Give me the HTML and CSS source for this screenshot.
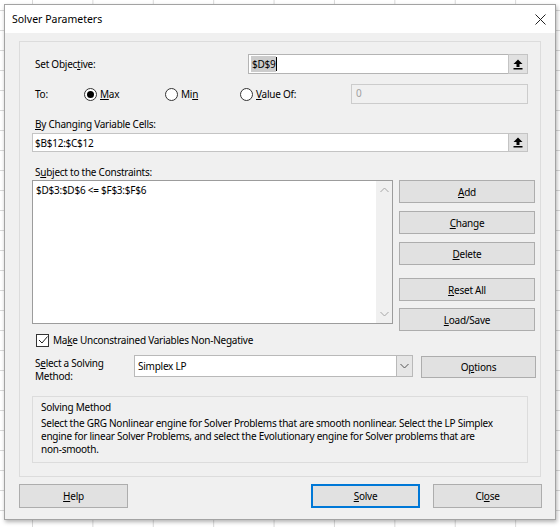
FILE: index.html
```html
<!DOCTYPE html>
<html lang="en">
  <head>
    <meta charset="UTF-8" />
    <title>Solver Parameters</title>
    <link rel="stylesheet" href="styles.css">
  </head>
  <body>
    <div class="dialog">
      <div class="titlebar">
        <span class="title">Solver Parameters</span>
        <svg class="close" width="11" height="11" viewBox="0 0 11 11">
          <path d="M0.5 0.5 L10.5 10.5 M10.5 0.5 L0.5 10.5" stroke="#222" stroke-width="1" fill="none" />
        </svg>
      </div>

      <div class="content">
        <div class="panel">
          <div class="row row-objective">
            <span class="label objective-label">Set Objec<u>t</u>ive:</span>
            <div class="ref-input objective-input">
              <span class="field"><span class="selected">$D$9</span><span class="caret"></span></span>
              <span class="ref-btn">
                <svg width="10" height="11" viewBox="0 0 10 11">
                  <path d="M5 0.5 L9.5 5 L6.5 5 L6.5 8 L3.5 8 L3.5 5 L0.5 5 Z" fill="#000" />
                  <rect x="0.5" y="9" width="9" height="1.5" fill="#000" />
                </svg>
              </span>
            </div>
          </div>

          <div class="row row-to">
            <span class="label to-label">To:</span>
            <span class="option option-max"><span class="radio checked"></span><span><u>M</u>ax</span></span>
            <span class="option option-min"><span class="radio"></span><span>Mi<u>n</u></span></span>
            <span class="option option-value"><span class="radio"></span><span><u>V</u>alue Of:</span></span>
            <div class="value-input">0</div>
          </div>

          <div class="caption"><u>B</u>y Changing Variable Cells:</div>
          <div class="ref-input changing-input">
            <span class="field">$B$12:$C$12</span>
            <span class="ref-btn">
              <svg width="10" height="11" viewBox="0 0 10 11">
                <path d="M5 0.5 L9.5 5 L6.5 5 L6.5 8 L3.5 8 L3.5 5 L0.5 5 Z" fill="#000" />
                <rect x="0.5" y="9" width="9" height="1.5" fill="#000" />
              </svg>
            </span>
          </div>

          <div class="caption">S<u>u</u>bject to the Constraints:</div>
          <div class="constraints">
            <div class="listbox">
              <div class="list-items">
                <div class="list-item">$D$3:$D$6 &lt;= $F$3:$F$6</div>
              </div>
              <div class="scrollbar">
                <svg width="9" height="6" viewBox="0 0 9 6">
                  <path d="M0.5 5 L4.5 1 L8.5 5" stroke="#a6a6a6" stroke-width="1" fill="none" />
                </svg>
                <svg width="9" height="6" viewBox="0 0 9 6">
                  <path d="M0.5 1 L4.5 5 L8.5 1" stroke="#a6a6a6" stroke-width="1" fill="none" />
                </svg>
              </div>
            </div>
            <div class="side-buttons">
              <button class="btn"><u>A</u>dd</button>
              <button class="btn"><u>C</u>hange</button>
              <button class="btn"><u>D</u>elete</button>
              <button class="btn btn-reset"><u>R</u>eset All</button>
              <button class="btn btn-load"><u>L</u>oad/Save</button>
            </div>
          </div>

          <div class="check-row">
            <span class="checkbox">
              <svg width="10" height="10" viewBox="0 0 10 10">
                <path d="M1 5 L4 8 L9.5 1.5" stroke="#222" stroke-width="1" fill="none" />
              </svg>
            </span>
            <span>Ma<u>k</u>e Unconstrained Variables Non-Negative</span>
          </div>

          <div class="method-row">
            <div class="label method-label">
              <div>S<u>e</u>lect a Solving</div>
              <div>Method:</div>
            </div>
            <div class="select">
              <span class="select-value">Simplex LP</span>
              <span class="select-arrow">
                <svg width="9" height="6" viewBox="0 0 9 6">
                  <path d="M0.5 1 L4.5 5 L8.5 1" stroke="#555" stroke-width="1" fill="none" />
                </svg>
              </span>
            </div>
            <button class="btn btn-options">O<u>p</u>tions</button>
          </div>

          <div class="group">
            <div class="group-title">Solving Method</div>
            <p class="group-text">Select the GRG Nonlinear engine for Solver Problems that are smooth nonlinear. Select the LP Simplex engine for linear Solver Problems, and select the Evolutionary engine for Solver problems that are <span class="nowrap">non-smooth.</span></p>
          </div>
        </div>

        <div class="footer">
          <button class="btn btn-footer"><u>H</u>elp</button>
          <div class="footer-right">
            <button class="btn btn-footer btn-default"><u>S</u>olve</button>
            <button class="btn btn-footer">Cl<u>o</u>se</button>
          </div>
        </div>
      </div>
    </div>
  </body>
</html>
```

FILE: styles.css
```css
* {
  box-sizing: border-box;
}
body {
  margin: 0;
  padding: 0;
  width: 560px;
  height: 527px;
  overflow: hidden;
  font-family: "Segoe UI", "Noto Sans", sans-serif;
  font-size: 10px;
  letter-spacing: -0.25px;
  color: #000;
  background-color: #fff;
  background-image: linear-gradient(to right, #d9d9d9 1px, transparent 1px),
    linear-gradient(to bottom, #d9d9d9 1px, transparent 1px);
  background-size: 60.4px 20px;
  background-position: 32px 10px;
}
u {
  text-decoration: underline;
  text-underline-offset: 1px;
}
.nowrap {
  white-space: nowrap;
}
.dialog {
  width: 552px;
  height: 516px;
  margin: 4px 0 0 4px;
  background-color: #f0f0f0;
  border: 1px solid #a3a3a3;
  box-shadow: 1px 2px 4px rgba(0, 0, 0, 0.3);
}
.titlebar {
  height: 28px;
  background-color: #fff;
  display: flex;
  align-items: center;
  justify-content: space-between;
  padding: 0 9px 0 7px;
}
.title {
  font-size: 10.5px;
  letter-spacing: 0;
}
.close {
  display: block;
}
.content {
  padding: 8px 14px 0 14px;
}
.panel {
  width: 522px;
  height: 436px;
  border: 1px solid #dcdcdc;
  padding: 12px 0 0 12px;
}
.row {
  display: flex;
  align-items: center;
  height: 20px;
}
.label {
  padding-left: 3px;
}
.objective-label {
  width: 216px;
}
.ref-input {
  display: flex;
  height: 20px;
}
.field {
  flex: 1;
  background-color: #fff;
  border: 1px solid #c4c4c4;
  border-right: none;
  display: flex;
  align-items: center;
  padding-left: 2px;
  line-height: 16px;
}
.objective-input {
  width: 280px;
}
.objective-input .field {
  border-color: #b4b4b4;
}
.selected {
  background-color: #cccccc;
  padding: 0 1px;
}
.caret {
  width: 1px;
  height: 14px;
  background-color: #000;
}
.ref-btn {
  width: 20px;
  background-color: #e1e1e1;
  border: 1px solid #c4c4c4;
  display: flex;
  align-items: center;
  justify-content: center;
}
.row-to {
  margin-top: 10px;
}
.to-label {
  width: 52px;
}
.option {
  display: flex;
  align-items: center;
  gap: 3px;
}
.option-max {
  width: 81px;
}
.option-min {
  width: 75px;
}
.option-value {
  width: 111px;
}
.radio {
  width: 13px;
  height: 13px;
  border: 1px solid #333;
  border-radius: 50%;
  display: inline-flex;
  align-items: center;
  justify-content: center;
  background-color: #fff;
}
.radio.checked::after {
  content: "";
  width: 7px;
  height: 7px;
  border-radius: 50%;
  background-color: #000;
}
.value-input {
  width: 177px;
  height: 20px;
  border: 1px solid #cccccc;
  background-color: #f0f0f0;
  color: #a0a0a0;
  padding-left: 4px;
  line-height: 17px;
}
.caption {
  margin-top: 12px;
  padding-left: 3px;
  line-height: 16px;
}
.changing-input {
  width: 496px;
  height: 19px;
  margin-top: 1px;
}
.constraints {
  display: flex;
  align-items: flex-start;
  gap: 6px;
}
.listbox {
  width: 361px;
  height: 144px;
  border: 1px solid #9c9c9c;
  background-color: #fff;
  display: flex;
}
.list-items {
  flex: 1;
  padding: 2px 3px;
}
.list-item {
  line-height: 14px;
}
.scrollbar {
  width: 16px;
  background-color: #f0f0f0;
  display: flex;
  flex-direction: column;
  align-items: center;
  justify-content: space-between;
  padding: 6px 0 6px 0;
}
.side-buttons {
  display: flex;
  flex-direction: column;
  width: 136px;
  gap: 8px;
}
.btn {
  font-family: inherit;
  font-size: 10px;
  letter-spacing: -0.25px;
  color: #000;
  height: 23px;
  padding: 0;
  background-color: #e1e1e1;
  border: 1px solid #adadad;
  border-radius: 0;
}
.btn-reset {
  margin-top: 5px;
}
.btn-load {
  margin-top: -1px;
}
.check-row {
  display: flex;
  align-items: center;
  gap: 4px;
  margin-top: 2px;
  padding-left: 4px;
  height: 14px;
}
.checkbox {
  width: 13px;
  height: 13px;
  border: 1px solid #333;
  background-color: #fff;
  display: flex;
  align-items: center;
  justify-content: center;
}
.method-row {
  display: flex;
  align-items: flex-start;
  margin-top: 8px;
}
.method-label {
  width: 102px;
  line-height: 13px;
  margin-top: 2px;
  padding-right: 12px;
}
.select {
  width: 279px;
  height: 22px;
  border: 1px solid #b9b9b9;
  background-color: #fff;
  display: flex;
}
.select-value {
  flex: 1;
  padding-left: 3px;
  line-height: 20px;
}
.select-arrow {
  width: 16px;
  background-color: #e6e6e6;
  border-left: 1px solid #b9b9b9;
  display: flex;
  align-items: center;
  justify-content: center;
}
.btn-options {
  width: 115px;
  height: 22px;
  margin-left: 8px;
  margin-top: 1px;
}
.group {
  width: 496px;
  height: 67px;
  margin-top: 13px;
  border: 1px solid #dcdcdc;
  padding: 2px 8px 0 8px;
}
.group-title {
  line-height: 16px;
}
.group-text {
  margin: 2px 0 0 0;
  line-height: 13px;
}
.footer {
  display: flex;
  justify-content: space-between;
  margin-top: 7px;
  width: 523px;
}
.footer-right {
  display: flex;
  gap: 13px;
}
.btn-footer {
  width: 109px;
  height: 24px;
}
.btn-default {
  border: 2px solid #0078d7;
}
```
